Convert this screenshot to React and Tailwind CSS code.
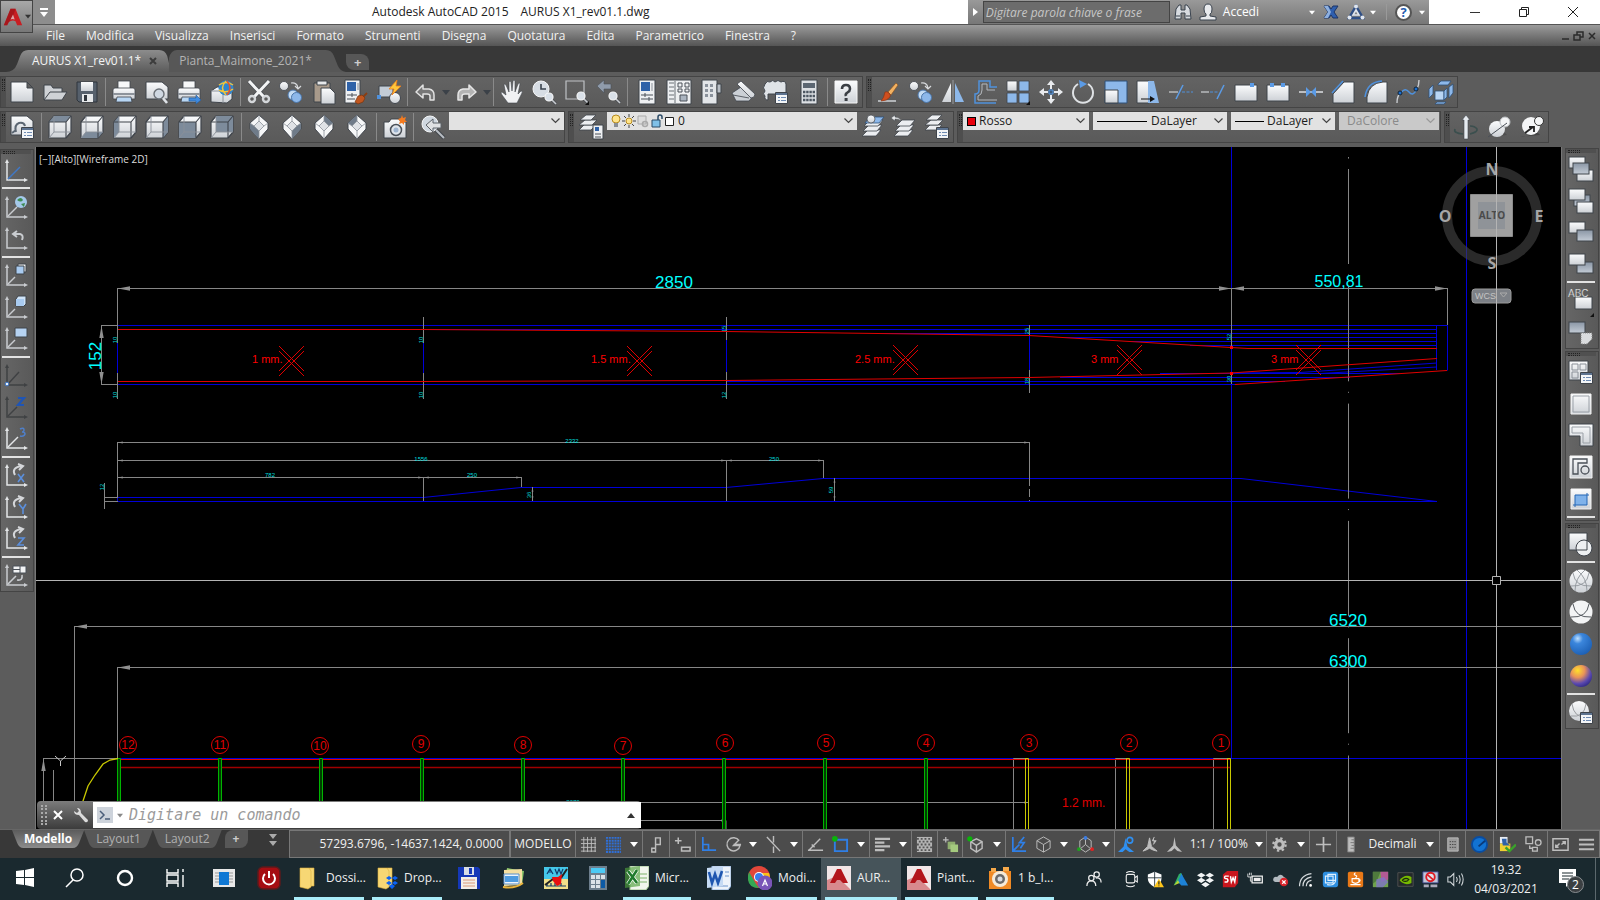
const W = "#eceef1";
const B = "#8db8ea";
const K = "#3f444b";

/* ---------- icon drawings, 24 x 24 ---------- */

const cube = (face) => (
  <g strokeLinejoin="round">
    <path d="M1 7 6 1h17v16l-5 6H1z" fill="url(#silver)" stroke={K} strokeWidth="1.2" />
    {face === "top" && <path d="M1 7 6 1h17l-5 6z" fill="#7d8b9b" />}
    {face === "bottom" && <path d="M1 23l5-6h17l-5 6z" fill="#7d8b9b" />}
    {face === "left" && <path d="M1 7l5-6v16l-5 6z" fill="#7d8b9b" />}
    {face === "right" && <path d="M18 7l5-6v16l-5 6z" fill="#7d8b9b" />}
    {face === "front" && <path d="M1 7h17v16H1z" fill="#7d8b9b" />}
    {face === "back" && <path d="M6 1h17v16H6z" fill="#7d8b9b" />}
    <path d="M1 7h17v16M18 7l5-6" fill="none" stroke={K} strokeWidth="1.1" />
    <path d="M6 1v16h17M6 17l-5 6" fill="none" stroke="#8a9098" strokeWidth=".9" />
  </g>
);

const diamond = (d) => (
  <g strokeLinejoin="round">
    <path d="M11 0l9 8v6l-9 10-9-10V8z" fill="#f6f7f8" stroke={K} />
    <path d="M11 6l5 5-5 5-5-5z" fill="#dfe2e6" />
    <path d={d} fill="#6f7b89" />
    <path d="M11 0v6M2 8l4 3M20 8l-4 3M11 16v8M11 6l5 5-5 5-5-5z" fill="none" stroke="#8a9098" strokeWidth=".8" />
  </g>
);

const axes = (c, extra) => (
  <g>
    <path d="M3 3v19h18" fill="none" stroke={c} strokeWidth="1.5" />
    <path d="M1 5l2-4 2 4zM20 20l4 2-4 2z" fill={c} />
    {extra}
  </g>
);

const lens = (x, y) => (
  <g>
    <path d={`M${x + 3} ${y + 3}l4 4`} stroke="#4a4e53" strokeWidth="3" />
    <path d={`M${x + 3} ${y + 3}l4 4`} stroke="#c9ccd0" strokeWidth="1.6" />
    <circle cx={x} cy={y} r="4" fill="#d9e0e8" stroke="#f4f5f6" strokeWidth="1.2" />
  </g>
);

const sheets = (
  <g stroke={K} strokeWidth=".8" fill={W}>
    <path d="M1 21l6-6h13l-5 6z" />
    <path d="M2 16l6-6h13l-5 6z" />
    <path d="M3 11l6-6h13l-5 6z" />
  </g>
);

const cornerSheets = (
  <g stroke={K} strokeWidth=".8" fill={W}>
    <path d="M0 15l5-5h12l-5 5z" />
    <path d="M0 10l6-5h12l-5 5z" />
    <path d="M1 5l6-5h10l-5 5z" />
  </g>
);

const miniList = (
  <g>
    <path d="M11.500 12.500h12v11h-12z" fill="#f3f5f7" stroke={K} />
    <path d="M12 13h11v2H12z" fill="#5d7390" />
    <path d="M14 17.500h2M14 20.500h2M17 17.500h5M17 20.500h5" stroke="#6f8cb4" />
  </g>
);

const printer = (
  <g stroke={K} strokeWidth=".8">
    <path d="M6 1h12v9H6z" fill="#f7f8f9" />
    <path d="M1 10q0-2 2-2h18q2 0 2 2v9H1z" fill="url(#silver)" />
    <path d="M1 13h22v2H1z" fill="#8d939b" stroke="none" />
    <path d="M5 17h14l1 5H4z" fill="#b8d6f3" />
  </g>
);

const twoCircles = (
  <g>
    <circle cx="5" cy="6" r="4.500" fill="url(#silver)" stroke={K} strokeWidth=".8" />
    <path d="M12 3q6-1 7 5M16 6l3 3 3-3" fill="none" stroke="#d8dadd" strokeWidth="1.2" />
    <circle cx="14" cy="15" r="5" fill="#c4dcf4" stroke="#4c77ab" />
    <circle cx="17.500" cy="17.500" r="5" fill={B} stroke="#4c77ab" />
  </g>
);

const plane = (x, y, fill = "url(#silver)", w = 16, h = 11) => (
  <rect x={x} y={y} width={w} height={h} fill={fill} stroke={K} />
);

const art = {
  newFile: <path d="M1 2h16l6 6v14H1z M17 2v6h6" fill="url(#silver)" stroke={K} />,
  open: <path d="M1 20V5h7l2 3h9v4h5l-5 8zM1 20l6-8h12" fill="#cfd2d6" stroke={K} />,
  save: (
    <g>
      <path d="M2 2h20v20H4l-2-2z" fill="#56606c" stroke="#2f353c" />
      <path d="M6 2h12v9H6z" fill="url(#silver)" />
      <path d="M7 14h11v8H7z" fill="#e6e8ea" />
      <path d="M9 15h3v6H9z" fill="#2f353c" />
    </g>
  ),
  print: printer,
  preview: (
    <g>
      <path d="M1 2h16l6 5v12H1z" fill="url(#silver)" stroke={K} />
      <path d="M17 17l5 6" stroke="#dfe3e8" strokeWidth="2.6" />
      <circle cx="14" cy="14" r="5" fill="#cfd8e2" stroke="#6a7077" strokeWidth="1.4" />
    </g>
  ),
  plot: (
    <g>
      {printer}
      <path d="M12 18h7v-3l5 5-5 4v-3h-7z" fill="#3f8be0" stroke="#245a9c" strokeWidth=".6" />
    </g>
  ),
  web: (
    <g>
      <path d="M1 11l6-4h11l4 3v9l-5 4-16-1z" fill="url(#silver)" stroke={K} />
      <path d="M1 11h12v12M13 11l5-4" fill="none" stroke="#8a9098" />
      <circle cx="16" cy="8" r="7.500" fill="#2e86cf" />
      <path d="M9 5q7-5 14 0M9 10q7 4 14-1M16 1q-7 7 0 14" fill="none" stroke="#f2c53a" strokeWidth="1.5" />
      <path d="M17 1q6 7 0 14" fill="none" stroke="#e0552f" strokeWidth="1.6" />
    </g>
  ),
  cut: (
    <g fill="none">
      <path d="M2 1l15 16M22 1L7 17" stroke="#4a4e53" strokeWidth="4.4" />
      <path d="M2 1l15 16M22 1L7 17" stroke="#f3f4f5" strokeWidth="3" />
      <circle cx="5" cy="19" r="3" stroke="#d4d7da" strokeWidth="2.4" />
      <circle cx="19" cy="19" r="3" stroke="#d4d7da" strokeWidth="2.4" />
    </g>
  ),
  copy: twoCircles,
  paste: (
    <g>
      <path d="M2 3h16v19H2z" fill="#a89a8b" stroke={K} />
      <path d="M5 1h10v4H5z" fill="#e6e8ea" stroke={K} />
      <path d="M9 8h9l5 5v11H9z" fill="url(#silver)" stroke={K} />
    </g>
  ),
  match: (
    <g>
      <path d="M1 0h15v23H1z" fill="#eef0f2" stroke={K} />
      <path d="M3 2h9v9H3z" fill="#2f62a8" />
      <path d="M14 3v7" stroke="#8a9098" />
      <path d="M3 15h10M3 19h8M8 13v4" stroke="#4a5058" />
      <path d="M23 13l-4 4" stroke="#8a3d12" strokeWidth="1.800" />
      <path d="M14 16l4-1 3 3-2 4-5 2-3-2z" fill="#c0561f" stroke="#7a350f" strokeWidth=".7" />
    </g>
  ),
  blockEdit: (
    <g>
      <path d="M2 6h14v11H2z" fill="#c3ccd6" stroke={K} />
      <circle cx="18" cy="18" r="5.500" fill="url(#silver)" stroke={K} />
      <path d="M0 15h4v4H0z" fill="#4f91dc" />
      <path d="M20 0l-8 9h5l-2 6 9-9h-5z" fill="#ffc63b" stroke="#ed7d1a" strokeWidth=".8" />
    </g>
  ),
  undo: <path d="M2 12l7-7v4h6q5 1 5 6v5h-4v-4q0-2-3-2H9v4z" fill="#777" stroke="#e2e2e2" strokeWidth="1.500" strokeLinejoin="round" />,
  redo: <path d="M22 12l-7-7v4H9q-5 1-5 6v5h4v-4q0-2 3-2h4v4z" fill="#b4b4b4" stroke="#e6e6e6" strokeWidth="1.500" strokeLinejoin="round" />,
  pan: (
    <path
      d="M8 23l-6-8q-2-3 0-3l4 3L4 5q0-2 2 0l3 7V2q1-2 2 0l1 9 1-10q1-2 2 0v11l3-8q2-2 2 0l-2 10 3-3q2 0 1 2l-5 10z"
      fill="#f0f1f3"
      stroke={K}
      strokeWidth=".6"
    />
  ),
  zoomRt: (
    <g>
      <circle cx="9" cy="9" r="8" fill="#d7dde4" stroke="#f5f6f7" />
      <path d="M9 4v5h5" fill="none" stroke="#39424d" strokeWidth="1.6" />
      {lens(17, 17)}
    </g>
  ),
  zoomWin: (
    <g>
      <path d="M1 1h18v18H1z" fill="none" stroke="#bfc2c5" strokeWidth="1.2" />
      {lens(16, 16)}
      <path d="M24 21v4h-4z" fill="#111" />
    </g>
  ),
  zoomPrev: (
    <g>
      <path d="M0 6l7-6v4h7v5H7v4z" fill="#8f9bab" stroke="#4a5058" strokeWidth=".6" />
      {lens(16, 16)}
    </g>
  ),
  props: (
    <g>
      <path d="M4 0h16v24H4z" fill="#eef0f2" stroke={K} />
      <path d="M6 2h9v9H6z" fill="#2f62a8" />
      <path d="M17 3v8" stroke="#8a9098" />
      <path d="M6 15h12M6 19h12M10 13v4M14 17v4" stroke="#4a5058" />
    </g>
  ),
  center: (
    <g>
      <path d="M0 0h24v24H0z" fill="#eef0f2" stroke={K} />
      <path d="M2 3h5M2 7h5M2 11h5M2 15h5M2 19h5M8 1v22" stroke="#6a7077" />
      <path d="M11 3h4v4h-4zM18 3h4v4h-4zM11 9h4v3h-4zM18 9h4v3h-4z" fill="none" stroke="#4a5058" />
      <path d="M13 15h7v6h-7z" fill="#aab4c0" stroke="#4a5058" />
    </g>
  ),
  palette: (
    <g>
      <path d="M3 0h15v24H3z" fill="#e3e6e9" stroke={K} />
      <path d="M18 4h4v9h-4z" fill="#b9bfc6" stroke={K} />
      <path d="M6 4h3v3H6zM11 4h3v3h-3zM6 9h3v3H6zM11 9h3v3h-3zM6 14h3v3H6zM11 14h3v3h-3z" fill="#8a929c" />
    </g>
  ),
  sheetSet: (
    <g stroke={K} strokeWidth=".8">
      <path d="M0 13l9-6 13 8-5 6H4z" fill="#cbd0d6" />
      <path d="M5 4l4-3 14 13q0 4-4 4z" fill="url(#silver)" />
      <path d="M1 15l16 3" fill="none" />
    </g>
  ),
  markup: (
    <g>
      <path d="M1 4q2-4 5-2 3-3 5 0 3-3 6 0 4-2 5 2v10H4v6q-4 0-3-4-3-2 0-5-3-3 0-7z" fill="#dfe3e7" stroke={K} />
      {miniList}
    </g>
  ),
  calc: (
    <g>
      <path d="M4 0h16v24H4z" fill="#dde0e4" stroke={K} />
      <path d="M6 3h12v5H6z" fill="#5b6672" />
      <path d="M6 12h12M6 16h12M6 20h12" stroke="#4d5762" strokeWidth="2.6" strokeDasharray="2.4 .8" />
    </g>
  ),
  help: (
    <g>
      <path d="M1 1h22v22H1z" fill="url(#silver)" stroke="#f7f7f7" />
      <path d="M8 9q0-4 4-4t4 4q0 2-2.500 3.500T12 16" fill="none" stroke="#3b3f44" strokeWidth="2.600" />
      <path d="M10.600 18h3v3h-3z" fill="#3b3f44" />
    </g>
  ),
  erase: (
    <g>
      <path d="M2 21h18" stroke="#c9ccd0" strokeWidth="1.6" />
      <path d="M20 3l-8 9 3 3 7-10z" fill="#f1b162" stroke="#8a4d17" strokeWidth=".6" />
      <path d="M9 12q2-1 4 1t1 4q-3 4-9 4 3-3 4-9z" fill="#cf4f1e" stroke="#8a2f0f" strokeWidth=".6" />
    </g>
  ),
  mirror: (
    <g>
      <path d="M10 3v19H1z" fill="url(#silver)" />
      <path d="M14 3v19h9z" fill={B} />
      <path d="M12 0v24" stroke="#9a9da1" />
    </g>
  ),
  offset: (
    <g fill="none">
      <path d="M22 23H1v-9q4 0 4-4V1h11v6h7" stroke="#4f91dc" strokeWidth="1.500" />
      <path d="M23 20H4v-4q4-1 4-6V4h5v6h8" stroke="#b4b8bd" />
    </g>
  ),
  array: (
    <g stroke={K} strokeWidth=".8">
      <path d="M1 1h10v10H1z" fill="url(#silver)" />
      <path d="M13 1h10v10H13zM1 13h10v10H1zM13 13h10v10H13z" fill={B} />
      <path d="M24 21v4h-4z" fill="#111" stroke="none" />
    </g>
  ),
  move: (
    <g>
      <path d="M12 0l4 5h-3v4h-2V5H8zM12 24l4-5h-3v-4h-2v4H8zM0 12l5-4v3h4v2H5v3zM24 12l-5-4v3h-4v2h4v3z" fill="#e9ebee" />
      <path d="M10 10h4v4h-4z" fill="#3f5a78" stroke="#5b9be6" />
    </g>
  ),
  rotate: (
    <g>
      <path d="M7 4a10 10 0 1 0 10 0" fill="none" stroke="#dfe2e5" strokeWidth="2" />
      <path d="M8 0l8 4-7 4z" fill="#5b9be6" />
    </g>
  ),
  scale: (
    <g>
      <path d="M1 1h22v22H1z" fill={B} stroke="#2f5078" />
      <path d="M1 10h13v13H1z" fill="url(#silver)" stroke={K} />
    </g>
  ),
  stretch: (
    <g>
      <path d="M1 1h12v22H1z" fill="url(#silver)" stroke={K} />
      <path d="M12 1h6l5 22H12z" fill={B} />
      <path d="M5 19h10" stroke="#111" />
      <path d="M14 16l5 3-5 3z" fill="#111" />
    </g>
  ),
  trim: (
    <g>
      <path d="M0 12h9" stroke="#bfc2c5" strokeWidth="1.4" />
      <path d="M13 12h11" stroke="#4f91dc" strokeDasharray="3 1.500" />
      <path d="M7 19l7-14" stroke="#5b9be6" strokeWidth="1.6" />
    </g>
  ),
  extend: (
    <g>
      <path d="M0 12h8" stroke="#bfc2c5" strokeWidth="1.4" />
      <path d="M9 12h9" stroke="#4f91dc" strokeDasharray="3 1.500" />
      <path d="M16 19l7-14" stroke="#5b9be6" strokeWidth="1.6" />
    </g>
  ),
  breakAt: (
    <g>
      <path d="M1 5h22v16H1z" fill="url(#silver)" stroke={K} />
      <path d="M16 3h4v4h-4z" fill="#5b9be6" />
    </g>
  ),
  breakTwo: (
    <g>
      <path d="M1 5h22v16H1z" fill="url(#silver)" stroke={K} />
      <path d="M4 3h4v4H4zM15 3h4v4h-4z" fill="#5b9be6" />
    </g>
  ),
  join: (
    <g>
      <path d="M0 12h24" stroke="#d5d8db" strokeWidth="1.6" />
      <path d="M7 7l5 5-5 5zM17 7l-5 5 5 5z" fill="#5b9be6" />
    </g>
  ),
  chamfer: (
    <g>
      <path d="M2 23V14L13 2h10v21z" fill="url(#silver)" stroke={K} />
      <path d="M1 13L12 1" stroke="#4f91dc" strokeWidth="1.6" />
    </g>
  ),
  fillet: (
    <g>
      <path d="M3 23v-6Q5 3 19 2h4v21z" fill="url(#silver)" stroke={K} />
      <path d="M1 17Q3 2 18 1" fill="none" stroke="#4f91dc" strokeWidth="1.6" />
    </g>
  ),
  blend: (
    <g fill="none">
      <path d="M1 23q0-8 4-10M21 9q2-4 2-9" stroke="#c9ccd0" strokeWidth="1.4" />
      <path d="M5 13q4-6 8-1t8-3" stroke="#4f91dc" strokeWidth="1.4" />
      <circle cx="4" cy="13" r="2" fill="#1c6fd0" stroke="#123" />
      <circle cx="20" cy="9" r="2" fill="#1c6fd0" stroke="#123" />
    </g>
  ),
  explode: (
    <g fill={B} stroke="#2f5078" strokeWidth=".8">
      <path d="M9 4l3-3h10l-3 4H9z" />
      <path d="M0 9l4-4v9l-4 4zM20 7l4-3v9l-4 5z" />
      <path d="M6 11h9v9H6z" fill="#b9d5f4" />
      <path d="M15 11l3-3v9l-3 3zM8 22h9l-2 2H6z" />
    </g>
  ),
  views: (
    <g>
      <path d="M1 1h16l6 5v14H1z" fill="url(#silver)" stroke={K} />
      <path d="M2 18l4-3M6 17q-2-7 3-9 5-1 6 3" fill="none" stroke="#5b6672" strokeWidth="2" />
      {miniList}
    </g>
  ),
  cubeTop: cube("top"),
  cubeBottom: cube("bottom"),
  cubeLeft: cube("left"),
  cubeRight: cube("right"),
  cubeFront: cube("front"),
  cubeBack: cube("back"),
  isoSW: diamond("M2 8l4 3 5 5v8L2 14z"),
  isoSE: diamond("M20 8l-4 3-5 5v8l9-10z"),
  isoNE: diamond("M11 0l9 8-4 3-5-5z"),
  isoNW: diamond("M11 0L2 8l4 3 5-5z"),
  camera: (
    <g>
      <path d="M1 7h5l2-3h8l2 3h5v16H1z" fill="url(#silver)" stroke={K} />
      <circle cx="13" cy="15" r="5.500" fill="#dfe5ec" stroke="#4a5058" strokeWidth="1.500" />
      <circle cx="13" cy="15" r="2.500" fill="#9eb4cf" />
      <path d="M19 0l1 3 3-1-1 3 2 2-3 0 0 3-2-2-3 1 1-3-2-2 3-1z" fill="#f47b20" />
    </g>
  ),
  zoomBack: (
    <g>
      <path d="M15 15l8 8" stroke="#43474c" strokeWidth="4" />
      <path d="M15 15l8 8" stroke="#b9bec4" strokeWidth="2" />
      <circle cx="9" cy="9" r="8" fill="#cfd7e0" stroke="#f4f5f6" />
      <path d="M5 10l7-6v4h8v5h-8v4z" fill="#dfe1e3" stroke="#5d6268" />
    </g>
  ),
  layerProps: (
    <g>
      {cornerSheets}
      <path d="M14 10h10v14H14z" fill="#eef0f2" stroke={K} />
      <path d="M16 12h4v4h-4z" fill="#2f62a8" />
      <path d="M16 19h6M16 22h6" stroke="#4a5058" />
    </g>
  ),
  layerCurrent: (
    <g>
      {sheets}
      <path d="M4 8l5-6h14l-5 6z" fill={B} stroke="#2f5078" strokeWidth=".8" />
      <circle cx="10" cy="4" r="4" fill="url(#silver)" stroke={K} strokeWidth=".7" />
    </g>
  ),
  layerPrev: (
    <g>
      {sheets}
      <path d="M-2 3l4-3v2q5 0 6 4Q6 4 2 4v2z" fill="#e6e8ea" stroke={K} strokeWidth=".5" />
    </g>
  ),
  layerState: (
    <g>
      {cornerSheets}
      {miniList}
    </g>
  ),
  extrude: (
    <g>
      <path d="M1 14q-2 4 8 5M16 19q8-2 7-5-2-3-7-3" fill="none" stroke="#3b4f4e" strokeWidth="1.600" />
      <path d="M12 0l4 5h-2v19h-4V5H8z" fill="#e6ebf0" stroke={K} strokeWidth=".6" />
    </g>
  ),
  bodyA: (
    <g>
      <path d="M0 22q10 0 16-6l4 4z" fill="#444" opacity=".6" />
      <circle cx="10" cy="14" r="8" fill="url(#silver)" />
      <circle cx="18" cy="7" r="5" fill="#f4f5f6" stroke="#b9bcc0" />
      <path d="M1 22L20 8" stroke="#4a5058" />
    </g>
  ),
  bodyB: (
    <g>
      <path d="M0 22q10 0 16-6l4 4z" fill="#333" opacity=".6" />
      <circle cx="11" cy="11" r="9" fill="#f4f5f6" />
      <circle cx="19" cy="6" r="4.500" fill="#f4f5f6" stroke="#333" />
      <path d="M5 18l8-6M9 12h5v5" fill="none" stroke="#222" strokeWidth="1.800" />
    </g>
  ),
  ucs: axes("#e4e6e8", <path d="M4 21L16 9" stroke="#3f78c8" strokeWidth="1.400" />),
  ucsWorld: axes("#c9ccd0", (
    <g>
      <path d="M4 21l9-9" stroke="#c9ccd0" strokeWidth="1.400" />
      <circle cx="17" cy="7" r="6" fill="#a5c9ea" />
      <path d="M13 5q4-4 6 0-2 3-6 0M17 9l4-1-1 4z" fill="#3d8b52" />
    </g>
  )),
  ucsPrev: axes("#c9ccd0", <path d="M10 8h6q4 1 2 6M13 5l-4 3 4 3" fill="none" stroke="#c9ccd0" strokeWidth="2" />),
  ucsFace: axes("#c9ccd0", (
    <g>
      <path d="M4 21l7-7" stroke="#c9ccd0" strokeWidth="1.400" />
      <path d="M14 1h8v8h-8z" fill="#f2f3f4" stroke={K} />
      <path d="M12 3h8v8h-8z" fill="#a9cbf0" stroke={K} />
    </g>
  )),
  ucsObject: axes("#c9ccd0", (
    <g>
      <path d="M4 21l7-7" stroke="#c9ccd0" strokeWidth="1.400" />
      <path d="M12 4l2-3h8v8l-2 2h-8z" fill="#cfe3f7" stroke={K} />
      <path d="M12 4h8v7h-8z" fill="#a9cbf0" />
    </g>
  )),
  ucsView: axes("#c9ccd0", (
    <g>
      <path d="M4 21l7-7" stroke="#c9ccd0" strokeWidth="1.400" />
      <path d="M11 2h12v9H11z" fill="#b6d3f2" stroke={K} />
    </g>
  )),
  ucsOrigin: axes("#3f4143", (
    <g>
      <path d="M4 21L15 9" stroke="#3f4143" strokeWidth="1.400" />
      <circle cx="3" cy="21" r="1.800" fill="#e8f1fb" stroke="#3f78c8" />
    </g>
  )),
  ucsZAxis: axes("#3f4143", (
    <g fill="none">
      <path d="M4 21l9-9" stroke="#3f4143" strokeWidth="1.400" />
      <path d="M14 3h6l-6 7h6" stroke="#1f55b5" strokeWidth="2.200" />
    </g>
  )),
  ucs3: axes("#e4e6e8", (
    <g fill="none">
      <path d="M4 21L14 11" stroke="#e4e6e8" strokeWidth="1.400" />
      <path d="M16 3q4-2 4 1 0 2-2 2 3 0 3 2-1 3-5 2" stroke="#4f7fc8" strokeWidth="1.500" />
    </g>
  )),
  ucsX: axes("#e4e6e8", (
    <g fill="none">
      <path d="M11 12q-4-7 6-9M14 1l5 2-4 4" stroke="#d5d7da" strokeWidth="2" />
      <path d="M14 11l6 8M20 11l-6 8" stroke="#5b8fdc" strokeWidth="1.600" />
    </g>
  )),
  ucsY: axes("#e4e6e8", (
    <g fill="none">
      <path d="M11 12q-4-7 6-9M14 1l5 2-4 4" stroke="#d5d7da" strokeWidth="2" />
      <path d="M15 9l4 5 3-5M19 14v5" stroke="#5b8fdc" strokeWidth="1.600" />
    </g>
  )),
  ucsZ: axes("#e4e6e8", (
    <g fill="none">
      <path d="M11 12q-4-7 6-9M14 1l5 2-4 4" stroke="#d5d7da" strokeWidth="2" />
      <path d="M14 12h6l-6 7h6" stroke="#5b8fdc" strokeWidth="1.600" />
    </g>
  )),
  ucsApply: axes("#c9ccd0", (
    <g>
      <path d="M4 21l8-8M13 17q6 1 5-5" fill="none" stroke="#c9ccd0" strokeWidth="1.600" />
      <path d="M9 3h13v7H9z" fill="#f2f3f4" stroke="#4a5058" />
      <path d="M9 6.500h7M16 3v7" stroke="#4a5058" />
    </g>
  )),
  orderFront: <g>{plane(0, 0)}{plane(8, 13)}{plane(4, 6, "url(#slate)")}</g>,
  orderBack: <g>{plane(5, 6, "url(#slate)")}{plane(0, 0)}{plane(8, 13)}</g>,
  orderAbove: <g>{plane(0, 2)}{plane(8, 10, "url(#slate)")}</g>,
  orderUnder: <g>{plane(8, 10, "url(#slate)")}{plane(0, 2)}</g>,
  orderText: (
    <g>
      <path d="M6 8h17v12H6z" fill="url(#silver)" stroke={K} />
      <path d="M25 24v4h-4z" fill="#111" />
      <text x="-1" y="8" fontSize="10" fill="#f1f1f1" stroke="#444" strokeWidth=".2" fontFamily="Liberation Sans, sans-serif">ABC</text>
    </g>
  ),
  orderHatch: (
    <g>
      {plane(0, 2, "url(#slate)")}
      <path d="M12 13h11v6l-5 5h-6z" fill="#dadcde" stroke="#888" strokeDasharray="1 1" />
    </g>
  ),
  region: (
    <g>
      <path d="M0 1h19v19H0z" fill="url(#silver)" stroke={K} />
      <path d="M3 4h6v6H3zM11 4h6v6h-6zM3 12h6v6H3z" fill="none" stroke="#8a9098" />
      {miniList}
    </g>
  ),
  vpSingle: <g><path d="M2 2h20v20H2z" fill="url(#silver)" stroke="#f4f4f4" /><path d="M4 4h16v16H4z" fill="none" stroke="#9aa0a7" /></g>,
  vpPoly: <g><path d="M0 1h24v22H11V13H0z" fill="url(#silver)" stroke={K} /><path d="M3 4h18v16h-7V10H3z" fill="none" stroke="#9aa0a7" /></g>,
  vpObject: (
    <g fill="none">
      <path d="M1 1h22v22H1z" fill="url(#silver)" stroke="#f4f4f4" />
      <path d="M4 19V4h14v4H9v11zM20 15a4 4 0 1 1-8 0 4 4 0 0 1 8 0" stroke="#4a5058" strokeWidth="1.300" />
    </g>
  ),
  vpClip: (
    <g>
      <path d="M2 2h20v20H2z" fill="url(#silver)" stroke="#f4f4f4" />
      <path d="M6 8h12v10H6z" fill="#7fb2ea" />
      <path d="M4 18h14V6M6 20V8h14" fill="none" stroke="#2566b5" />
    </g>
  ),
  style2d: (
    <g stroke={K}>
      <path d="M0 1h18v17H0z" fill="url(#silver)" />
      <circle cx="15" cy="16" r="8" fill="#eef0f2" />
      <path d="M18 8v10H8" fill="none" />
    </g>
  ),
  wire: (
    <g>
      <circle cx="12" cy="12" r="11.500" fill="url(#silver)" />
      <path d="M4 4q2 14 18 13M20 4q-2 14-18 13M8 1q10 8 10 21M16 1Q6 9 6 22" fill="none" stroke="#90959b" strokeWidth=".9" />
    </g>
  ),
  hidden: (
    <g>
      <circle cx="12" cy="12" r="11.500" fill="#f3f4f5" />
      <path d="M4 4q2 14 18 13M20 4q-2 14-18 13" fill="none" stroke="#555a60" />
    </g>
  ),
  realistic: <circle cx="12" cy="12" r="11" fill="url(#blueBall)" />,
  conceptual: <circle cx="12" cy="12" r="11" fill="url(#sunBall)" />,
  styleMgr: (
    <g>
      <circle cx="10" cy="11" r="10" fill="url(#silver)" />
      <path d="M3 4q2 14 14 13M17 4Q15 18 2 16" fill="none" stroke="#9a9da1" />
      {miniList}
    </g>
  ),
};

function Icon({ name, className = "h-6 w-6" }) {
  return (
    <svg viewBox="0 0 24 24" className={`${className} shrink-0 overflow-visible`}>
      {art[name]}
    </svg>
  );
}

/* ---------- toolbars ---------- */

function Tools({ items }) {
  return items.map((it, i) => {
    if (it === "|") return <span key={i} className="flex h-7 w-[5px] justify-center"><i className="h-full w-px bg-[#8a8a8a]" /></span>;
    if (it === "v") return (
      <button key={i} aria-label="Altro" className="w-2">
        <svg viewBox="0 0 8 5" className="h-[5px] w-2"><path d="M0 0h8L4 5z" fill="#3b4148" /></svg>
      </button>
    );
    return <button key={i} aria-label={it} className="flex min-w-0 flex-1 justify-center"><Icon name={it} /></button>;
  });
}

function Grip() {
  return (
    <span className="h-full w-[5px] shrink-0 bg-[#4e4e4e] pt-0.5">
      <i className="mx-auto block h-3 w-[3px] border-x border-dotted border-[#222]" />
    </span>
  );
}

function Bar({ className, children }) {
  return (
    <div className={`flex h-8 items-center border border-[#444] bg-gradient-to-b from-[#636363] to-[#5a5a5a] ${className}`}>
      {children}
    </div>
  );
}

function Combo({ label, value, className = "", pad = "pl-2", disabled, children }) {
  return (
    <div className={`relative mb-3 h-[18px] shrink-0 ${className}`}>
      <select
        aria-label={label}
        disabled={disabled}
        className={`block h-full w-full appearance-none text-xs leading-[18px] ${pad} ${disabled ? "bg-[#c9c9c9] text-[#8a8a8a]" : "bg-[#e2e2e2] text-[#1c1c1c]"}`}
      >
        <option>{value}</option>
      </select>
      <div className="pointer-events-none absolute inset-y-0 left-0 flex items-center">{children}</div>
      <svg viewBox="0 0 9 6" className="pointer-events-none absolute top-1.5 right-1 h-1.5 w-[9px]">
        <path d="M.5.5l4 4 4-4" fill="none" stroke={disabled ? "#999" : "#444"} strokeWidth="1.2" />
      </svg>
    </div>
  );
}

function LayerIcons() {
  return (
    <svg viewBox="0 0 68 16" className="h-4 w-[68px]">
      <circle cx="9" cy="6" r="4" fill="#ffe48a" stroke="#b58a20" />
      <path d="M7 10h4v4H7z" fill="#8a8f96" />
      <circle cx="22" cy="8" r="3" fill="#ffe48a" stroke="#b58a20" />
      <path d="M22 1v3M22 12v3M15 8h3M26 8h3M17 3l2 2M25 11l2 2M17 13l2-2M25 5l2-2" stroke="#444" />
      <path d="M31 3h8v8h-8z" fill="#ddd" stroke="#aaa" />
      <circle cx="38" cy="11" r="2.500" fill="none" stroke="#aaa" strokeWidth="1.600" />
      <path d="M45 7h8v7h-8z" fill="#7fc0e8" stroke="#2a4a66" />
      <path d="M51 7V4q0-2 2-2t2 2v2" fill="none" stroke="#2a4a66" strokeWidth="1.500" />
      <path d="M58.500 4.500h8v8h-8z" fill="#fff" stroke="#222" />
    </svg>
  );
}

const standard = "newFile open save | print preview plot web | cut copy paste match blockEdit | undo v redo v | pan zoomRt zoomWin zoomPrev | props center palette sheetSet markup calc | help".split(" ");
const modify = "erase copy mirror offset array move rotate scale stretch trim extend breakAt breakTwo join chamfer fillet blend explode".split(" ");
const viewTools = "views | cubeTop cubeBottom cubeLeft cubeRight cubeFront cubeBack | isoSW isoSE isoNE isoNW | camera | zoomBack".split(" ");

function Toolbars() {
  return (
    <div className="flex h-[75px] shrink-0 flex-col gap-[3px] bg-[#5c5c5c] pt-1">
      <div className="flex gap-[3px]">
        <Bar className="w-[863px]"><Grip /><Tools items={standard} /></Bar>
        <Bar className="w-[592px]"><Grip /><Tools items={modify} /></Bar>
      </div>
      <div className="flex gap-[3px]">
        <Bar className="w-[565px]">
          <Grip />
          <div className="flex flex-1 items-center"><Tools items={viewTools} /></div>
          <Combo label="Vista" value="" className="w-[115px]" />
        </Bar>
        <Bar className="w-[386px]">
          <Grip />
          <span className="flex w-[33px]"><Tools items={["layerProps"]} /></span>
          <Combo label="Layer" value="0" className="w-[250px]" pad="pl-[71px]"><LayerIcons /></Combo>
          <div className="flex flex-1"><Tools items={["layerCurrent", "layerPrev", "layerState"]} /></div>
        </Bar>
        <Bar className="w-[484px] gap-1">
          <Grip />
          <Combo label="Colore" value="Rosso" className="-ml-1 w-[126px]" pad="pl-4"><i className="ml-1 h-[9px] w-[9px] border border-black bg-red-600" /></Combo>
          <Combo label="Tipo di linea" value="DaLayer" className="w-[134px]" pad="pl-[58px]"><i className="ml-1 h-px w-[50px] bg-black" /></Combo>
          <Combo label="Spessore" value="DaLayer" className="w-[104px]" pad="pl-[36px]"><i className="ml-1 h-px w-[29px] bg-black" /></Combo>
          <Combo label="Stile di stampa" value="DaColore" className="w-[100px]" disabled />
        </Bar>
        <Bar className="w-[105px]"><Grip /><Tools items={["extrude", "bodyA", "bodyB"]} /></Bar>
      </div>
    </div>
  );
}

function SideBar({ items, className }) {
  return (
    <div className={`flex w-[34px] flex-col items-center border border-[#444] bg-gradient-to-r from-[#666] to-[#595959] pr-0.5 ${className}`}>
      <span className="flex h-1 w-full shrink-0 items-center bg-[#505050] px-0.5"><i className="h-[3px] w-3 border-y border-dotted border-[#222]" /></span>
      {items.map((it, i) =>
        it === "|" ? (
          <span key={i} className="flex h-[5px] w-full shrink-0 items-center px-px"><i className="h-0.5 w-full bg-[#e2e2e2]" /></span>
        ) : (
          <button key={i} aria-label={it} className="flex min-h-0 flex-1 items-center"><Icon name={it} /></button>
        )
      )}
    </div>
  );
}

/* ---------- title, menu, tabs ---------- */

function Arrow({ className = "w-2 text-white" }) {
  return <svg viewBox="0 0 8 5" className={`h-[5px] shrink-0 ${className}`}><path d="M0 0h8L4 5z" fill="currentColor" /></svg>;
}

function Logo({ className }) {
  return (
    <svg viewBox="0 0 24 24" className={className}>
      <path d="M1 22L9 2h6l8 20h-6l-2-5q-4-2-8 1l-2 4z" fill="#c81e23" />
      <path d="M9 2h6l-3 9-5 7-2 4H1z" fill="#8e1015" opacity=".55" />
      <path d="M9 15l3-6 2 6q-3-1-5 0z" fill="#e8e0e0" opacity=".7" />
    </svg>
  );
}

function TitleBar() {
  return (
    <header className="relative flex h-6 shrink-0 bg-white text-xs">
      <button aria-label="AutoCAD" className="z-10 flex h-[33px] w-[33px] shrink-0 items-center gap-0.5 border border-[#444] bg-gradient-to-b from-[#a8a8a8] to-[#777] pl-0.5">
        <Logo className="h-[22px] w-5" />
        <Arrow className="w-1.5 text-[#333]" />
      </button>
      <button aria-label="Accesso rapido" className="flex w-[22px] shrink-0 flex-col items-center justify-center gap-0.5 bg-[#8d8d8d]">
        <i className="h-0.5 w-2 bg-white" />
        <Arrow />
      </button>
      <h1 className="ml-[317px] flex flex-1 gap-3 leading-6 text-[#222]">
        <span>Autodesk AutoCAD 2015</span>
        <span>AURUS X1_rev01.1.dwg</span>
      </h1>
      <div className="flex items-center bg-gradient-to-b from-[#999] to-[#777] text-white">
        <button aria-label="Espandi" className="flex w-[15px] justify-center">
          <svg viewBox="0 0 5 8" className="h-2 w-[5px]"><path d="M0 0l5 4-5 4z" fill="#fff" /></svg>
        </button>
        <input aria-label="Cerca" placeholder="Digitare parola chiave o frase" className="h-[22px] w-[187px] border border-[#444] bg-[#6c6c6c] px-0.5 text-xs italic placeholder:text-[#c6c6c6]" />
        <button aria-label="Trova" className="ml-[3px] w-5">
          <svg viewBox="0 0 20 18" className="h-[18px] w-5">
            <path d="M2 16l1-10 3-4h2v5h4V2h2l3 4 1 10h-6v-6H8v6z" fill="#d7dbe0" stroke="#39424d" />
            <path d="M3 13h4M13 13h4" stroke="#39424d" />
          </svg>
        </button>
        <button className="ml-[5px] flex items-center gap-[5px]">
          <svg viewBox="0 0 20 18" className="h-[18px] w-5">
            <path d="M6 6q0-5 4-5t4 5-2 5v2l6 1v3H2v-3l6-1v-2Q6 10 6 6z" fill="#e8eaed" stroke="#39424d" />
          </svg>
          Accedi
        </button>
        <Arrow className="ml-[50px] w-1.5 text-white" />
        <svg viewBox="0 0 16 16" className="ml-2 h-4 w-4">
          <path d="M1 2h5l2 3 2-3h5l-4 6 4 6h-5l-2-3-2 3H1l4-6z" fill="#2f5fae" stroke="#1d3566" />
          <path d="M1 2h4l3 6-3 6H1l4-6z" fill="#8fb0de" />
        </svg>
        <svg viewBox="0 0 18 16" className="ml-2 h-4 w-[18px]" fill="none">
          <path d="M9 2l7 12H2z" stroke="#2f4f86" strokeWidth="2.400" />
          <path d="M9 6l3 5H6z" stroke="#dfe6f0" strokeWidth="1.500" />
          <circle cx="9" cy="2.500" r="2" fill="#dfe6f0" /><circle cx="2.500" cy="13.500" r="2" fill="#dfe6f0" /><circle cx="15.500" cy="13.500" r="2" fill="#dfe6f0" />
        </svg>
        <Arrow className="ml-[5px] w-1.5 text-white" />
        <i className="ml-2.5 h-4 w-px bg-[#9a9a9a]" />
        <span className="ml-2 flex h-[17px] w-[17px] items-center justify-center rounded-full border-2 border-[#555] bg-white text-[13px] font-bold leading-none text-[#1f5cb0]">?</span>
        <Arrow className="mr-1 ml-[7px] w-1.5 text-white" />
      </div>
      <div className="flex w-[171px] shrink-0 items-center justify-around pr-[3px] pl-[21px]">
        <button aria-label="Riduci"><svg viewBox="0 0 12 12" className="h-3 w-3"><path d="M1 6.500h10" stroke="#333" /></svg></button>
        <button aria-label="Ripristina"><svg viewBox="0 0 12 12" className="h-3 w-3" fill="none" stroke="#222"><path d="M1.500 3.500h7v7h-7zM3.500 3V1.500h7v7H9" /></svg></button>
        <button aria-label="Chiudi"><svg viewBox="0 0 12 12" className="h-3 w-3" stroke="#222"><path d="M1 1l10 10M11 1L1 11" /></svg></button>
      </div>
    </header>
  );
}

const menus = ["File", "Modifica", "Visualizza", "Inserisci", "Formato", "Strumenti", "Disegna", "Quotatura", "Edita", "Parametrico", "Finestra", "?"];

function MenuBar() {
  return (
    <nav className="flex h-[22px] shrink-0 items-center gap-[21px] border-t border-[#555] bg-gradient-to-b from-[#9c9c9c] to-[#555] pl-[46px] text-xs text-[#f2f2f2]">
      {menus.map((m) => <button key={m}>{m}</button>)}
      <svg viewBox="0 0 36 10" className="mr-[3px] ml-auto h-2.5 w-9" fill="none" stroke="#2b2b2b" strokeWidth="1.500">
        <path d="M1 8h7M13 4h6v5h-6zM16 4V1h6v5h-3M28 2l6 6M34 2l-6 6" />
      </svg>
    </nav>
  );
}

function FileTabs() {
  return (
    <div className="flex h-[26px] shrink-0 items-end bg-[#383838] text-xs">
      <div className="relative z-10 flex h-[22px] items-center">
        <svg viewBox="0 0 168 22" preserveAspectRatio="none" className="absolute inset-0 h-full w-full">
          <path d="M0 22h6q8 0 11-8l3-8q2-6 8-6h130q6 0 8 6l2 8v8z" fill="url(#tab)" />
        </svg>
        <button className="relative pl-8 text-[#f4f4f4]">AURUS X1_rev01.1*</button>
        <button aria-label="Chiudi scheda" className="relative mr-3 ml-2">
          <svg viewBox="0 0 8 8" className="h-2 w-2"><path d="M1 1l6 6M7 1L1 7" stroke="#3c3c3c" strokeWidth="2" /></svg>
        </button>
      </div>
      <div className="relative flex h-[22px] w-[177px] items-center">
        <svg viewBox="0 0 176 22" preserveAspectRatio="none" className="absolute inset-0 h-full w-full">
          <path d="M0 22V8q2-8 8-8h148q6 0 8 6l4 10q2 5 8 6z" fill="#575757" />
        </svg>
        <button className="relative pl-2.5 text-[#b4b4b4]">Pianta_Maimone_2021*</button>
      </div>
      <button aria-label="Nuova scheda" className="relative mb-0.5 h-4 w-[23px] rounded-tr-lg rounded-bl-lg bg-[#575757] text-[13px] leading-4 font-bold text-[#ccc]">+</button>
    </div>
  );
}

/* ---------- drawing area ---------- */

const GREY = "#868686";
const BLUE = "#0000d8";
const CYAN = "#00ffff";
const posts = [119, 220, 321, 422, 523, 623, 724, 825, 926];
const yellowPosts = [1027, 1128, 1229];
const balloons = [[12, 128, 745], [11, 220, 745], [10, 320, 746], [9, 421, 744], [8, 523, 745], [7, 623, 746], [6, 725, 743], [5, 826, 743], [4, 926, 743], [3, 1029, 743], [2, 1129, 743], [1, 1221, 743]];
const crosses = [[291, 361, "1 mm.", 252], [639, 361, "1.5 mm.", 591], [905, 360, "2.5 mm.", 855], [1129, 360, "3 mm", 1091], [1308, 360, "3 mm", 1271]];
// a and c are the grey spans, b the blue one between them, t the labels
const stations = [
  { x: 117.5, a: [317, 343], b: [343, 373], c: [373, 399], t: [["10", 340], ["10", 395]] },
  { x: 423.5, a: [317, 343], b: [343, 373], c: [373, 399], t: [["10", 340], ["10", 395]] },
  { x: 726.5, a: [317, 340], b: [340, 372], c: [372, 399], t: [["15", 329], ["12", 395]] },
  { x: 1029.5, a: [325, 335], b: [335, 370], c: [370, 393], t: [["25", 331], ["18", 381]] },
  { x: 1231.5, a: [288, 347], b: [347, 373], c: [373, 384], t: [["52", 337], ["30", 379]] },
];
const smallDims = [["2332", 572, 443], ["1556", 421, 461], ["782", 270, 477], ["250", 472, 477], ["250", 774, 461], ["2070", 573, 804]];

function Head({ x, y, r = 0, s = 1 }) {
  return <path d="M0 0l12-2.200v4.400z" fill="#909090" transform={`translate(${x} ${y}) rotate(${r}) scale(${s})`} />;
}

function Drawing() {
  return (
    <svg viewBox="36 147 1525 682" preserveAspectRatio="xMinYMin slice" className="block h-full w-full" fontFamily="Liberation Sans, Arial, sans-serif">
      <g stroke={BLUE} fill="none">
        <path d="M1231.500 147V758.500M1466.500 147V829M118 758.500H1561" />
        <path d="M118 325.500H1447.500V370.500M118 384.500H1235M423 329.500H1437M880 333.500H1437M1062 337.500H1437M1130 341.500H1437M1190 345.500H1437M1436.500 325V370" />
        <path d="M726 381.500H1285M1060 377.500H1350M1160 373.500H1400M1231 373L1300 372.500 1437 363M1320 373.500L1437 367" />
        <path d="M117.500 497.500V501.500M117 501.500H1437" />
        <path d="M117 497.500H423L521 487.500H726L823 478.500H1241L1437 501.500" />
      </g>
      <g stroke={GREY} fill="none">
        <path d="M118 288.500H1447M117.500 288V325M1447.500 288V325" />
        <path d="M101.500 325.500V384.500M101 325.500H118M101 384.500H118" />
        <path d="M118 442.500H1029M118 460.500H823M118 477.500H521M117.500 442V497M423.500 477V501M521.500 477V487M726.500 460V501M823.500 460V478M1029.500 442V478" />
        <path d="M1029.500 478V501" strokeDasharray="8 3" />
        <path d="M104.500 483V509M104 497.500H118M104 501.500H118M532.500 487V501M834.500 478V501" />
        <path d="M1348.500 147V829" strokeDasharray="95 10.500 1 10.800" strokeDashoffset="-22" />
        <path d="M74.500 626.500H1561M118 667.500H1561M74.500 626V829M117.500 667V758" />
        <path d="M43.500 758V829M43 758.500H118M53.500 770V829" />
        <path d="M600 802.500H1029M600 820.500H726V829" />
        <path d="M1013.500 829V758.500H1027M1115.500 829V758.500H1128M1213.500 829V758.500H1229" />
      </g>
      <path d="M1348.500 157V158.500" stroke={GREY} />
      <Head x={118} y={288.5} /><Head x={1231} y={288.5} r={180} /><Head x={1232} y={288.5} /><Head x={1447} y={288.5} r={180} />
      <Head x={101.5} y={326} r={90} /><Head x={101.5} y={384} r={-90} />
      <Head x={75} y={626.5} /><Head x={118} y={667.5} /><Head x={43.5} y={759} r={90} />
      {[[118, 442.5, 0], [118, 460.5, 0], [118, 477.5, 0], [423, 477.5, 180], [424, 477.5, 0], [521, 477.5, 180], [726, 460.5, 180], [727, 460.5, 0], [823, 460.5, 180], [1029, 442.5, 180], [726, 820.5, 180], [1029, 802.5, 180], [532.5, 487, 90], [532.5, 501, -90], [834.5, 478, 90], [834.5, 501, -90]].map(([x, y, r], i) => (
        <Head key={i} x={x} y={y} r={r} s={0.4} />
      ))}

      {stations.map((s) => (
        <g key={s.x}>
          <path d={`M${s.x} ${s.b[0]}V${s.b[1]}`} stroke={BLUE} />
          <path d={`M${s.x} ${s.a[0]}V${s.a[1]}M${s.x} ${s.c[0]}V${s.c[1]}`} stroke={GREY} />
          {s.t.map(([t, y]) => (
            <text key={y} transform={`translate(${s.x - 1} ${y}) rotate(-90)`} textAnchor="middle" fontSize="6" fill="#00dcdc">{t}</text>
          ))}
        </g>
      ))}
      <g fill="none" stroke="#e00000">
        <path d="M118 329.500H423L726 331.500 1029 335.500 1231 347.500 1248 348.500H1437" />
        <path d="M118 381.500H423L726 380.500 1029 377.500 1231 373 1437 358.500M1235 384.500L1447 370.500" />
        <path d="M118 759.500H1231" />
        <path d="M118 767.500H1231" stroke="#a00000" strokeWidth="1.500" />
      </g>
      <path d="M1230 346h3v3h-3zM1230 372h3v3h-3z" fill="#f00" />

      {crosses.map(([x, y, t, tx]) => (
        <g key={x}>
          <path d={`M${x - 12} ${y - 15}l25 25m0 5l-25 -25M${x + 13} ${y - 15}l-25 25m0 5l25 -25`} stroke="#e00000" fill="none" />
          <text x={tx} y="363" fontSize="11" fill="#f00">{t}</text>
        </g>
      ))}
      <g fill={CYAN} fontSize="17" textAnchor="middle">
        <text x="674" y="288">2850</text>
        <text x="1339" y="287" fontSize="16">550,81</text>
        <text x="1348" y="626">6520</text>
        <text x="1348" y="667">6300</text>
        <text transform="translate(101 356) rotate(-90)">152</text>
      </g>
      <g fill="#00dcdc" fontSize="6" textAnchor="middle">
        {smallDims.map(([t, x, y], i) => <text key={i} x={x} y={y}>{t}</text>)}
        <text transform="translate(104 487) rotate(-90)">12</text>
        <text transform="translate(531 495) rotate(-90)">36</text>
        <text transform="translate(833 490) rotate(-90)">59</text>
      </g>

      {posts.map((x) => (
        <g key={x}>
          <path d={`M${x - 2} 758h4v71h-4z`} fill="#003c00" />
          <path d={`M${x - 1.5} 829V758.500h3V829`} fill="none" stroke="#00b400" />
        </g>
      ))}
      {yellowPosts.map((x) => <path key={x} d={`M${x - 1.5} 829V758.500h3V829`} fill="none" stroke="#c8c800" />)}
      <path d="M82 804L88 786 95 775 103 764 110 760 118 758.500" fill="none" stroke="#c8c800" strokeWidth="1.300" />
      {balloons.map(([n, x, y]) => (
        <g key={n}>
          <circle cx={x} cy={y} r="8.500" fill="none" stroke="#e00000" />
          <text x={x} y={y + 4} fontSize="12" fill="#e00000" textAnchor="middle">{n}</text>
        </g>
      ))}
      <text x="1062" y="807" fontSize="12" fill="#e00000">1.2 mm.</text>
      <path d="M55 756l5.500 5 5.500-5M60.500 761v5M99 801l4 4 4-4" fill="none" stroke="#c8c8c8" />

      {/* view cube */}
      <circle cx="1492" cy="216" r="45" fill="none" stroke="#464646" strokeOpacity=".6" strokeWidth="10" />
      <path d="M1470.500 194.500h42v42h-42z" fill="#a0a0a0" stroke="#8a8a8a" />
      <path d="M1478 202h27v27h-27z" fill="#8f9398" />
      <g fontFamily="Open Sans, sans-serif" fontWeight="700" textAnchor="middle" fill="#a6a6a6" fontSize="16">
        <text x="1492" y="175">N</text><text x="1445" y="222">O</text><text x="1539" y="222">E</text><text x="1492" y="269">S</text>
        <text x="1492" y="219" fontSize="10" fill="#4a4a4a">ALTO</text>
      </g>
      <rect x="1472" y="289" width="39" height="14" rx="3" fill="#7c8086" stroke="#9a9a9a" />
      <text x="1475" y="299" fontSize="9" fill="#c4c4c4">WCS</text>
      <path d="M1500 293h7l-3.500 4z" fill="none" stroke="#aaa" />

      {/* cursor */}
      <path d="M36 580.500H1492M1501 580.500H1561M1496.500 147V576M1496.500 585V829M1492.500 576.500h8v8h-8z" fill="none" stroke="#b4b4b4" />
      <text x="39" y="163" fontSize="10" fill="#dcdcdc" fontFamily="Open Sans, sans-serif">[−][Alto][Wireframe 2D]</text>
    </svg>
  );
}

function CommandLine() {
  return (
    <form className="absolute bottom-0 left-px flex h-7 w-[604px] items-center rounded-sm bg-gradient-to-b from-[#7c7c7c] to-[#3c3c3c]">
      <span className="ml-1 h-5 w-1.5 border-x-2 border-dotted border-[#aaa]" />
      <button type="button" aria-label="Chiudi" className="ml-1.5">
        <svg viewBox="0 0 10 10" className="h-2.5 w-2.5"><path d="M1 1l8 8M9 1L1 9" stroke="#fff" strokeWidth="2" /></svg>
      </button>
      <button type="button" aria-label="Personalizza" className="ml-2.5">
        <svg viewBox="0 0 16 16" className="h-4 w-4"><path d="M1 4q0 4 5 4l6 7q3 1 3-2L8 6q0-5-4-5l2 3-2 2z" fill="#dcdcdc" /></svg>
      </button>
      <label className="ml-1 flex h-[26px] flex-1 items-center bg-white">
        <svg viewBox="0 0 16 16" className="ml-1 h-4 w-4">
          <path d="M0 0h16v16H0z" fill="#cdd3db" />
          <path d="M3 4l4 4-4 4M8 12h5" fill="none" stroke="#4c5f7a" strokeWidth="1.500" />
        </svg>
        <Arrow className="mx-1 w-1.5 text-[#888]" />
        <input aria-label="Comando" placeholder="Digitare un comando" className="ml-0.5 min-w-0 flex-1 font-['DejaVu_Sans_Mono',monospace] text-[15px] italic outline-none placeholder:text-[#9a9a9a]" />
        <svg viewBox="0 0 8 5" className="mr-1.5 h-[5px] w-2"><path d="M0 5h8L4 0z" fill="#333" /></svg>
      </label>
    </form>
  );
}

/* ---------- status bar ---------- */

const L = "#bdbdbd";
const st = {
  grid: <path d="M4 1v16M8 1v16M12 1v16M1 4h16M1 8h16M1 12h16M16 1v16M1 16h16" stroke={L} />,
  snap: <path d="M1 2h16M1 5h16M1 8h16M1 11h16M1 14h16M1 17h16" stroke="#2f6fd6" strokeWidth="2" strokeDasharray="2.200 .8" />,
  infer: <path d="M8 15V2h5v7H8M4 13h4v4H4z" stroke={L} strokeWidth="1.500" />,
  dyn: <path d="M1 5h7M4.500 1.500v7M8 12h9v4H8z" stroke={L} strokeWidth="1.600" />,
  ortho: <path d="M3 1v14h14M3 9h6v6" stroke="#2f7fe6" strokeWidth="1.800" />,
  polar: <path d="M15 5a7 7 0 1 0 1 5H9l6-6M9 9h8" stroke={L} strokeWidth="1.500" />,
  iso: <path d="M2 1l14 15M9 0v7M9 11v7" stroke={L} strokeWidth="1.500" />,
  track: <path d="M1 15h16M2 15L14 3M5 9l3 3" stroke={L} strokeWidth="1.500" />,
  osnap: <g><path d="M3 4h13v12H3z" stroke="#2f7fe6" strokeWidth="2" /><circle cx="3" cy="3" r="3" fill="#0ab40a" /></g>,
  lwt: <path d="M1 3h16M1 7h10M1 11h16M1 15h10" stroke={L} strokeWidth="2.400" />,
  transp: (
    <g>
      <path d="M1 1h16v16H1z" fill="#b4b4b4" />
      <path d="M1 3h16M1 9h16M1 15h16" stroke="#555" strokeWidth="2" strokeDasharray="2 2" />
      <path d="M3 6h14M3 12h14" stroke="#555" strokeWidth="2" strokeDasharray="2 2" />
    </g>
  ),
  cycle: <g><path d="M1 4h6M4 1v6" stroke={L} strokeWidth="1.300" /><path d="M6 6h8v8H6z" fill="#8fae6f" /><path d="M9 9h8v8H9z" fill="#a4c97e" /></g>,
  osnap3: <g><path d="M4 6l6-3 6 3v7l-6 4-6-4zM4 6l6 4 6-4M10 10v7" stroke={L} strokeWidth="1.500" /><circle cx="3" cy="3" r="2.800" fill="#0ab40a" /></g>,
  ducs: <path d="M3 1v15h14M3 16l7-7M15 1l-5 6h5l-4 6" stroke="#2f7fe6" strokeWidth="1.800" />,
  cube3: <path d="M2 5l7-4 7 4v8l-7 4-7-4zM2 5l7 4 7-4M9 9v8" stroke={L} />,
  gizmo: <g><path d="M9 9V2M9 9l6 5M9 9l-6 5M3 5l6-4 6 4v8l-6 4-6-4z" stroke={L} /><circle cx="9" cy="2" r="2" fill="#3a7be0" /><circle cx="2" cy="14" r="2" fill="#1fa01f" /><circle cx="16" cy="14" r="2" fill="#d22" /></g>,
  annoA: <g><path d="M8 2l2 9 7 6h-5l-4-3-3 3H0l6-6z" fill="#2f8ff0" /><circle cx="12.500" cy="4.500" r="3" stroke="#2f8ff0" strokeWidth="1.800" /></g>,
  annoB: <path d="M8 2l2 9 6 5-4-1-4-2-4 2-3 1 5-5zM13 1l-2 4h4l-3 4" stroke={L} fill={L} />,
  annoC: <path d="M9 1l1.500 9 6.500 7-5-1-3-3-3 3-5 1 6.500-7z" fill={L} />,
  gear: <g><circle cx="9" cy="9" r="4" stroke={L} strokeWidth="3.400" /><circle cx="9" cy="9" r="6.500" stroke={L} strokeWidth="2.400" strokeDasharray="2.500 2.600" /></g>,
  plus: <path d="M1 9h16M9 1v16" stroke={L} strokeWidth="1.800" />,
  ruler: <path d="M6 1h7v16H6zM13 4h-3M13 7h-4M13 10h-3M13 13h-4" fill={L} stroke="#777" />,
  sheet: <g><path d="M4 2h11v14H4z" fill="#9a9a9a" stroke={L} /><path d="M6 6h7M6 9h7M6 12h7" stroke="#444" strokeDasharray="1.500 1" /></g>,
  isolate: <g><circle cx="9" cy="9" r="8" fill="#1273d2" stroke="#0a4da0" strokeWidth="2" /><path d="M8 11l7-6" stroke="#0a3b7a" strokeWidth="2" /></g>,
  hw: <g><path d="M1 1h8v7H1z" fill="#e8edf3" /><path d="M1 8h11v8H1z" fill="#f0d030" /><path d="M3 3h5v4l4 3H4z" fill="#2f62a8" /><path d="M7 12l4 4 7-7" stroke="#3aa22a" strokeWidth="2.600" /></g>,
  shapes: <path d="M1 1h7v7H1zM17 7a3 3 0 1 1-6 0 3 3 0 0 1 6 0M5 10v3h3M8 12h5v4H8z" stroke={L} strokeWidth="1.400" />,
  full: <path d="M1 3h16v12H1zM4 12l4-4M4 9v3h3M14 6l-4 3M14 9V6h-3" stroke={L} strokeWidth="1.600" />,
  burger: <path d="M1 4h16M1 9h16M1 14h16" stroke={L} strokeWidth="2" />,
};

const statusGroups = [
  ["w-[67px]", "grid snap v"],
  ["w-[27px]", "infer"],
  ["w-[26px]", "dyn"],
  ["w-[107px]", "ortho polar v iso v"],
  ["w-[67px]", "track osnap v"],
  ["w-[42px]", "lwt v"],
  ["w-[26px]", "transp"],
  ["w-[25px]", "cycle"],
  ["w-[43px]", "osnap3 v"],
  ["w-[109px]", "ducs cube3 v gizmo v"],
  ["w-[152px]", "annoA annoB annoC 1:1_/_100% v"],
  ["w-[43px]", "gear v"],
  ["w-[27px]", "plus"],
  ["w-[103px]", "ruler Decimali v"],
  ["w-[26px]", "sheet"],
  ["w-[28px]", "isolate"],
  ["w-[54px]", "hw shapes"],
  ["w-[52px]", "full burger"],
];

function LayoutTab({ children, active }) {
  return (
    <button className={`relative h-[18px] px-3 text-xs leading-4 ${active ? "font-bold text-white" : "text-[#b0b0b0]"}`}>
      <svg viewBox="0 0 70 18" preserveAspectRatio="none" className="absolute inset-0 h-full w-full">
        <path d="M0 0h70l-5 13q-2 5-6 5H11q-4 0-6-5z" fill={active ? "url(#layout)" : "#575757"} />
      </svg>
      <span className="relative">{children}</span>
    </button>
  );
}

function StatusBar() {
  return (
    <footer className="flex h-[29px] shrink-0 items-stretch border-t border-[#666] bg-[#383838] text-xs text-[#f0f0f0]">
      <div className="flex min-w-0 flex-1 items-start pl-3">
        <LayoutTab active>Modello</LayoutTab>
        <LayoutTab>Layout1</LayoutTab>
        <LayoutTab>Layout2</LayoutTab>
        <button aria-label="Nuovo layout" className="ml-[3px] h-[18px] w-[23px] rounded-tl-lg rounded-br-lg bg-[#575757] leading-4 font-bold text-[#ccc]">+</button>
        <svg viewBox="0 0 8 12" className="mt-1 mr-3 ml-auto h-3 w-2"><path d="M0 0h8L4 5zM0 7h8l-4 5z" fill="#aaa" /></svg>
      </div>
      <button className="w-[221px] border border-[#777] bg-[#4c4c4c] pr-1.5 text-right">57293.6796, -14637.1424, 0.0000</button>
      <button className="w-[66px] border border-[#777] bg-[#4c4c4c]">MODELLO</button>
      {statusGroups.map(([w, names]) => (
        <div key={names} className={`${w} flex shrink-0 items-center justify-around border-y border-r border-[#777] bg-[#4c4c4c]`}>
          {names.split(" ").map((n, i) =>
            n === "v" ? (
              <button key={i} aria-label="Opzioni"><Arrow /></button>
            ) : st[n] ? (
              <button key={i} aria-label={n}><svg viewBox="0 0 18 18" fill="none" className="h-[17px] w-[17px]">{st[n]}</svg></button>
            ) : (
              <button key={i} className="whitespace-nowrap">{n.replaceAll("_", " ")}</button>
            )
          )}
        </div>
      ))}
    </footer>
  );
}

/* ---------- taskbar ---------- */

const folder = <path d="M4 2h9l2 3v16l-3 2-8-2z M13 2h5v18h-3" fill="#f7d774" stroke="#dcae3c" strokeWidth=".6" />;
const acad = (
  <g>
    <path d="M0 0h24v24H0z" fill="#f1e6e7" />
    <path d="M0 14l10-4 14 14H0z" fill="#d88a8e" />
    <path d="M3 17L10 3h4l7 14h-5l-3-3h-3l-2 3z" fill="#b3151b" />
  </g>
);

const app = {
  start: <path d="M3 5l8-1v7H3zM12 4l9-2v9h-9zM3 12h8v7l-8-1zM12 12h9v9l-9-2z" fill="#fff" />,
  search: <path d="M20 9a6 6 0 1 1-12 0 6 6 0 0 1 12 0M10 14l-7 7" fill="none" stroke="#fff" strokeWidth="1.500" />,
  cortana: <circle cx="12" cy="12" r="7" fill="none" stroke="#fff" strokeWidth="2.400" />,
  task: <path d="M4 3v4h11V3M4 21v-4h11v4M4 9h11v6H4zM20 3v3M20 9v12" fill="none" stroke="#fff" strokeWidth="1.400" />,
  news: <g><path d="M1 3h22v18H1z" fill="#e8e8e8" /><path d="M3 7h18M3 10h18M3 13h18M3 16h18" stroke="#999" /><path d="M7 6h10v13H7z" fill="#0f78d4" /></g>,
  power: <g><rect x="1" y="1" width="22" height="22" rx="5" fill="#a50d12" stroke="#5c1a1c" strokeWidth="1.500" /><path d="M8 8a6 6 0 1 0 8 0M12 5v7" fill="none" stroke="#fff" strokeWidth="2" /></g>,
  folder,
  drop: <g>{folder}<path d="M12 12l3-2 3 2-3 2zM18 12l3-2 3 2-3 2zM12 17l3-2 3 2-3 2zM18 17l3-2 3 2-3 2zM15 20l3-2 3 2-3 3z" fill="#0a62f5" /></g>,
  floppy: <g><path d="M1 1h20l2 2v20H1z" fill="#1538b8" /><path d="M7 1h10v8H7z" fill="#d8dde6" /><path d="M12 2h3v6h-3z" fill="#1538b8" /><path d="M4 11h16v12H4z" fill="#f2efe9" /><path d="M6 14h12M6 17h12M6 20h12" stroke="#d99a7a" /></g>,
  photos: <g><path d="M6 2l17 3-2 14-17-3z" fill="#8cc46a" /><path d="M3 4l18-1v16l-18 1z" fill="#f5dfa2" /><path d="M3 8h15v10H3z" fill="#eef4fb" stroke="#5b8fc8" /><path d="M4 10h13v6H4z" fill="#4f9be0" /><path d="M2 21q12 2 20-4" stroke="#e8b23a" strokeWidth="2" fill="none" /></g>,
  awp: <g><path d="M0 1h24v12H0z" fill="#45c8ea" /><path d="M0 13h24v10H0z" fill="#f0e08a" /><path d="M3 8l3-5 3 5M4 6h4M11 3l2 5 2-5 2 5 2-5M2 20h20M3 17v3M7 17v3M11 17v3M17 17v3" stroke="#123a6b" strokeWidth="1.200" fill="none" /><path d="M1 19l8-6M17 12l6-9" stroke="#222" strokeWidth="2" /><path d="M8 11h6l4-3-1 10-4 2-4-5z" fill="#e81010" /></g>,
  calc: <g><path d="M3 0h18v24H3z" fill="#6d7f8e" /><path d="M5 2h14v5H5z" fill="#4ccaf5" /><path d="M5 9h4v4H5zM10 9h4v4h-4zM15 9h4v4h-4zM5 14h4v4H5zM10 14h4v4h-4zM5 19h4v3H5zM10 19h4v3h-4z" fill="#dbe2e8" /><path d="M15 14h4v8h-4z" fill="#0c5aa5" /></g>,
  excel: <g><path d="M5 0h19v20l-3 4H5z" fill="#f1f6ee" stroke="#9ac08a" /><path d="M15 8h7M15 12h7M15 16h7" stroke="#7cb36a" /><path d="M0 2l15-2v20L0 22z" fill="#4ea03c" opacity=".65" /><path d="M3 5l9 12M12 4L3 18" stroke="#fff" strokeWidth="4" /><path d="M3 5l9 12M12 4L3 18" stroke="#1f7a2c" strokeWidth="2.600" /></g>,
  word: <g><path d="M5 0h19v20l-3 4H5z" fill="#eef3fa" stroke="#8fb0dc" /><path d="M18 6h4M18 10h4M12 20h9" stroke="#6b93cc" /><path d="M0 2l16-2v20L0 22z" fill="#c5daf4" /><path d="M2 6l3 11 3-9 3 9 4-12" fill="none" stroke="#1e56b0" strokeWidth="2.600" /></g>,
  chrome: <g><circle cx="11" cy="11" r="11" fill="#e2473a" /><path d="M1 6l7 12 3 4Q-1 22 0 10z" fill="#35a853" /><path d="M11 7h10q3 8-5 14l-5 1 5-9z" fill="#fbbf16" /><circle cx="11" cy="11" r="5" fill="#fff" /><circle cx="11" cy="11" r="4" fill="#3b7ded" /><circle cx="17" cy="17" r="7.500" fill="#7a55b8" /><path d="M14.500 20l2.500-6 2.500 6M15.500 18h3" fill="none" stroke="#fff" strokeWidth="1.200" /></g>,
  acad,
  cam: <g><path d="M1 5h22v18H1z" fill="#ef8a25" /><path d="M3 2h5v4H3zM15 1h6v4h-6z" fill="#f6a94a" /><circle cx="12" cy="13" r="8" fill="#f4ead9" /><circle cx="12" cy="13" r="5" fill="#6a6a6a" /><circle cx="12" cy="13" r="2.500" fill="#d8dde3" /></g>,
};

const tasks = [
  ["w-[50px]", "start"], ["w-[50px]", "search"], ["w-[50px]", "cortana"], ["w-[50px]", "task"], ["w-[47px]", "news"], ["w-[43px]", "power"],
  ["w-[78px]", "folder", "Dossi..."], ["w-[78px]", "drop", "Drop..."],
  ["w-[46px]", "floppy"], ["w-[42px]", "photos"], ["w-[43px]", "awp"], ["w-[42px]", "calc"],
  ["w-[76px]", "excel", "Micr..."], ["w-[47px]", "word"], ["w-[79px]", "chrome", "Modi..."],
  ["w-[80px]", "acad", "AUR...", true], ["w-[81px]", "acad", "Piant..."], ["w-[76px]", "cam", "1 b_I..."],
];

const tray = [
  <path d="M5 9V6q0-2 2-2h6q2 0 2 2v6q0 2-2 2H7q-2 0-2-2zM15 8l3-2v7l-3-2M5 2q5-3 10 0M5 17q5 3 10 0" fill="none" stroke="#eee" strokeWidth="1.300" />,
  <g><path d="M9 1l8 3v5q0 6-8 10Q1 15 1 9V4z" fill="#fff" /><path d="M9 1v18M1 8h16" stroke="#1b2b31" /><path d="M14 9l6 10H8z" fill="#ffc61a" /><path d="M14 12v4M14 17v1" stroke="#222" strokeWidth="1.300" /></g>,
  <g><path d="M2 17L8 4q3-4 4 1l-3 7z" fill="#2fae6b" /><path d="M11 3l8 14h-8L7 13z" fill="#1d82d6" /><path d="M2 17l5-6 2 3z" fill="#b7d433" /></g>,
  <path d="M5 2l5 3-5 3-5-3zM15 2l5 3-5 3-5-3zM5 8l5 3-5 3-5-3zM15 8l5 3-5 3-5-3zM10 13l5 3-5 3-5-3z" fill="#f2f4f5" />,
  <g><path d="M1 4l5-4h13v14l-4 5H1z" fill="#c9161d" /><path d="M8 6H4q-2 2 0 3h2q2 2 0 4H3M10 6l1 7 2-5 2 5 1-7" fill="none" stroke="#fff" strokeWidth="1.700" /></g>,
  <g><path d="M6 6h12v8H6z" fill="none" stroke="#eee" strokeWidth="1.500" /><path d="M8 8h8v4H8z" fill="#eee" /><path d="M1 3v4h5M3 2v3M5 2v3M4 7v5h2" stroke="#eee" fill="none" /></g>,
  <g><path d="M4 13q-4-1-2-5 2-2 4-1 4-5 8 0 4 1 3 6z" fill="#b3bac0" /><circle cx="14" cy="13" r="5" fill="#d8232a" /><path d="M12 11l4 4M16 11l-4 4" stroke="#fff" strokeWidth="1.500" /></g>,
  <g><path d="M3 18Q3 5 17 3M7 18q0-9 10-11M11 18q0-6 6-7" fill="none" stroke="#d5dadd" strokeWidth="1.400" /><circle cx="16" cy="17" r="1.600" fill="#fff" /></g>,
  <g><rect x="1" y="1" width="18" height="18" rx="3" fill="#2c8ee0" /><path d="M4 6h9v8H4zM7 4h9v7H7zM6 16q8 2 10-4" fill="none" stroke="#dff0ff" strokeWidth="1.300" /></g>,
  <g><rect x="1" y="1" width="18" height="18" rx="2" fill="#e87817" /><path d="M6 9h8v4q-4 3-8 0zM14 10q3 0 0 3M10 2q-3 2 0 3t0 3M4 16h12" fill="none" stroke="#fff" strokeWidth="1.300" /></g>,
  <g><path d="M1 1h18v18H1z" fill="#6fa24c" /><path d="M1 1h9l-4 10-5 4z" fill="#4f7a3d" /><path d="M10 1h9v9l-8 3z" fill="#b35a94" /><path d="M5 10l9-3 5 6-6 6H5z" fill="#7f74c8" opacity=".8" /></g>,
  <g><path d="M1 2h18v16H1z" fill="#23292a" stroke="#555" /><path d="M3 11q6-8 14-4v7q-8 4-14-3z" fill="#76b900" /><path d="M6 11q4-4 8-1-3 4-8 1" fill="none" stroke="#1b2b0b" strokeWidth="1.300" /></g>,
  <g><path d="M1 1h18v13H1z" fill="#bfc6d8" stroke="#36408a" /><path d="M2 16h6v3H2zM10 16h8v3h-8z" fill="#aab" /><circle cx="10" cy="7" r="5" fill="#dfe3ee" stroke="#e01c24" strokeWidth="2.200" /><path d="M6 4l8 7" stroke="#e01c24" strokeWidth="2" /></g>,
  <path d="M1 7h3l4-4v14l-4-4H1zM11 7q2 3 0 6M14 5q3 5 0 10M17 3q4 7 0 14" fill="none" stroke="#d5dadd" strokeWidth="1.200" />,
];

function Taskbar() {
  return (
    <div className="flex h-[42px] shrink-0 bg-[#1a292f] text-xs text-[#f0f0f0]">
      {tasks.map(([w, icon, label, active], i) => (
        <button key={i} aria-label={label || icon} className={`${w} flex shrink-0 items-stretch ${label ? "px-1" : "px-0"} ${active ? "bg-[#46545a]" : ""}`}>
          <span className={`flex w-full items-center gap-1.5 border-b-[3px] ${label ? "border-[#a9ecf9] pl-0.5" : "justify-center border-transparent"}`}>
            <svg viewBox="0 0 24 24" className="h-6 w-6 shrink-0">{app[icon]}</svg>
            {label && <span className="whitespace-nowrap">{label}</span>}
          </span>
        </button>
      ))}
      <div className="ml-auto flex items-center">
        <button aria-label="Contatti" className="mr-4">
          <svg viewBox="0 0 18 18" className="h-4 w-4" fill="none" stroke="#eee" strokeWidth="1.400">
            <circle cx="6" cy="8" r="3" /><path d="M1 17q0-6 5-6t5 6" /><circle cx="12" cy="4" r="3" /><path d="M11 8q6-1 6 5" />
          </svg>
        </button>
        {tray.map((t, i) => (
          <button key={i} aria-label={`Area di notifica ${i + 1}`} className="flex w-[25px] justify-center">
            <svg viewBox="0 0 20 20" className="h-[17px] w-[17px]">{t}</svg>
          </button>
        ))}
        <div className="w-[76px] text-center leading-[19px]">
          <div>19.32</div>
          <div>04/03/2021</div>
        </div>
        <button aria-label="Notifiche" className="mr-2 ml-2 flex w-[35px] justify-center">
          <svg viewBox="0 0 28 28" className="h-7 w-7">
            <path d="M3 4h17v14h-6l-4 4v-4H3z" fill="#fff" />
            <path d="M6 8h11M6 11h11M6 14h7" stroke="#1a292f" strokeWidth="1.200" />
            <circle cx="19.500" cy="19.500" r="8" fill="#3b3f42" stroke="#8a8f92" />
            <text x="19.500" y="24" fontSize="12" fill="#fff" textAnchor="middle">2</text>
          </svg>
        </button>
        <i className="mr-1 h-full w-px bg-[#5c686d]" />
      </div>
    </div>
  );
}

export default function App() {
  return (
    <div className="flex h-screen flex-col overflow-hidden bg-[#5c5c5c] font-['Open_Sans',sans-serif]">
      <svg className="absolute h-0 w-0">
        <defs>
          <linearGradient id="silver" x1="0" y1="0" x2="0" y2="1"><stop offset="0" stopColor="#fbfcfd" /><stop offset="1" stopColor="#cdd1d6" /></linearGradient>
          <linearGradient id="slate" x1="0" y1="0" x2="0" y2="1"><stop offset="0" stopColor="#8a96a5" /><stop offset="1" stopColor="#c3cbd5" /></linearGradient>
          <linearGradient id="tab" x1="0" y1="0" x2="0" y2="1"><stop offset="0" stopColor="#8c8c8c" /><stop offset="1" stopColor="#5c5c5c" /></linearGradient>
          <linearGradient id="layout" x1="0" y1="0" x2="0" y2="1"><stop offset="0" stopColor="#5c5c5c" /><stop offset="1" stopColor="#8c8c8c" /></linearGradient>
          <radialGradient id="blueBall" cx=".35" cy=".25" r=".8"><stop offset="0" stopColor="#bfe0ff" /><stop offset=".3" stopColor="#3b86dc" /><stop offset="1" stopColor="#1c5fb4" /></radialGradient>
          <radialGradient id="sunBall" cx=".35" cy=".25" r=".8"><stop offset="0" stopColor="#ffe02a" /><stop offset=".4" stopColor="#e8925a" /><stop offset=".75" stopColor="#5b49b0" /><stop offset="1" stopColor="#2f2a86" /></radialGradient>
        </defs>
      </svg>
      <TitleBar />
      <MenuBar />
      <FileTabs />
      <Toolbars />
      <div className="flex min-h-0 flex-1">
        <aside className="w-9 shrink-0 border-r border-[#777] pt-0.5">
          <SideBar className="h-[443px]" items={"ucs | ucsWorld ucsPrev | ucsFace ucsObject ucsView | ucsOrigin ucsZAxis ucs3 | ucsX ucsY ucsZ | ucsApply".split(" ")} />
        </aside>
        <main className="relative min-w-0 flex-1 bg-black">
          <Drawing />
          <CommandLine />
        </main>
        <aside className="flex w-[39px] shrink-0 flex-col gap-0.5 border-l border-[#777] pt-px pl-[3px]">
          <SideBar className="h-[201px]" items={"orderFront orderBack orderAbove orderUnder | orderText orderHatch".split(" ")} />
          <SideBar className="h-[170px]" items={"region vpSingle vpPoly vpObject vpClip |".split(" ")} />
          <SideBar className="h-[206px]" items={"style2d | wire hidden realistic conceptual | styleMgr".split(" ")} />
        </aside>
      </div>
      <StatusBar />
      <Taskbar />
    </div>
  );
}
